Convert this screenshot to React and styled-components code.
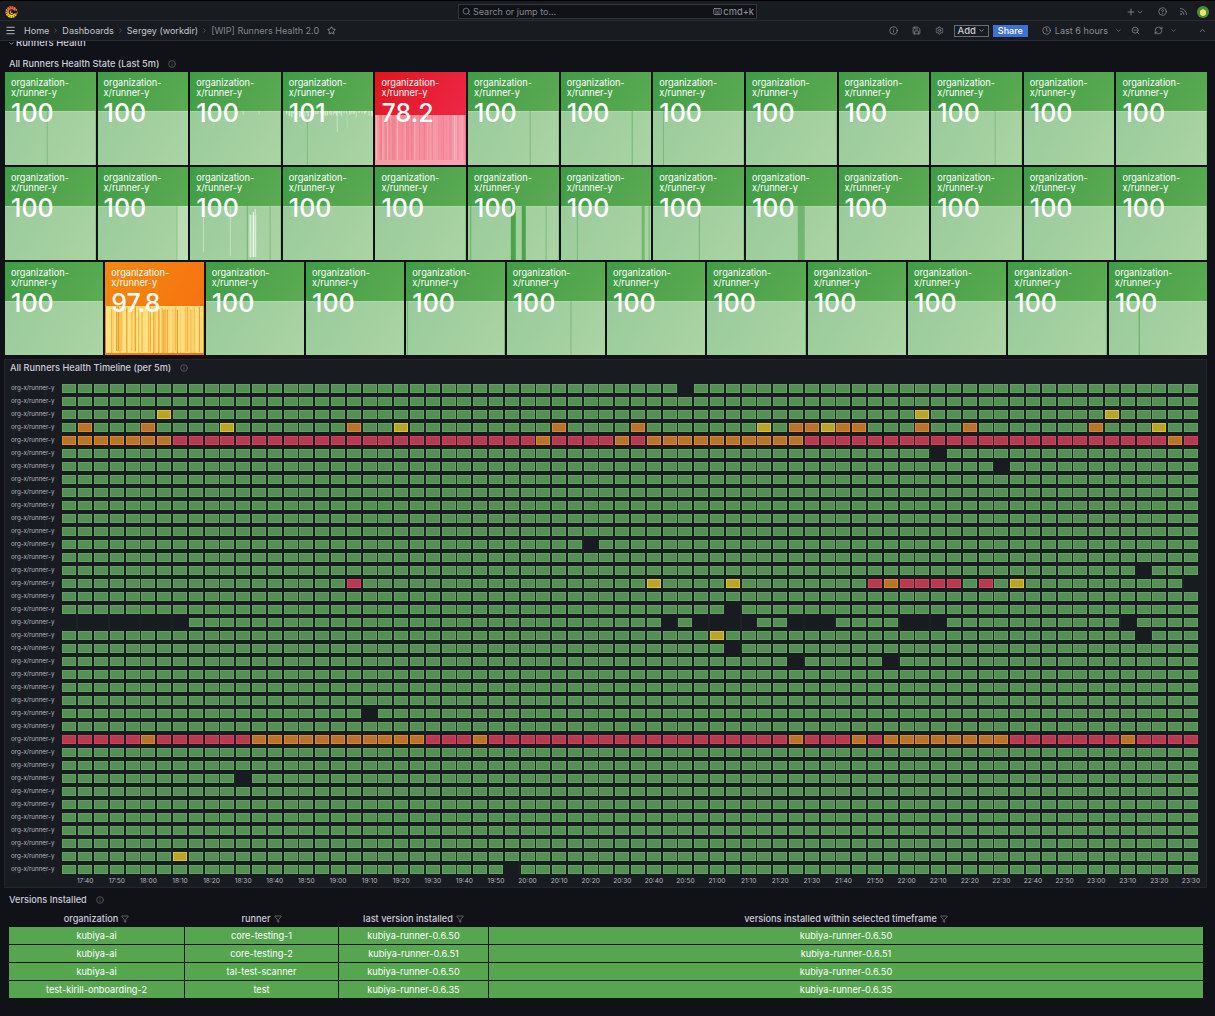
import React from "react";
import styled, { createGlobalStyle } from "styled-components";
import {
  Search, Menu, Star, Info, Save, Settings, Clock, ZoomOut, RefreshCw,
  ChevronDown, ChevronUp, ChevronRight, Plus, CircleHelp, Rss, Filter, Keyboard,
} from "lucide-react";

const Global = createGlobalStyle`
  html, body { margin: 0; padding: 0; background: #111217; }
  body { font-family: Inter, "Liberation Sans", sans-serif; color: #ccccdc; overflow: hidden; }
  #root { width: 1215px; height: 1016px; overflow: hidden; }
  * { box-sizing: border-box; }
`;

const Page = styled.div`
  display: flex;
  flex-direction: column;
  width: 1215px;
  height: 1016px;
  background: #111217;
`;

/* ---------- top bars ---------- */
const TopBar = styled.header`
  height: 21px;
  padding: 2px 6px 0 5px;
  display: grid;
  grid-template-columns: 1fr 300px 1fr;
  align-items: center;
  background: #181b1f;
  border-top: 1px solid #000;
  border-bottom: 1px solid #2a2c32;
`;
const LogoSlot = styled.div`
  display: flex;
  align-items: center;
`;
const SearchBox = styled.div`
  height: 15px;
  margin-left: 1px;
  display: flex;
  align-items: center;
  gap: 2px;
  padding: 0 2px 0 3px;
  background: #111217;
  border: 1px solid #33363c;
  font-size: 9px;
  color: #85868c;
`;
const SearchText = styled.span`
  flex: 1;
`;
const Shortcut = styled.span`
  display: flex;
  align-items: center;
  gap: 1px;
  color: #9a9ba3;
  font-size: 9.4px;
`;
const TopActions = styled.div`
  display: flex;
  align-items: center;
  justify-content: flex-end;
  gap: 12px;
  color: #8d8e96;
`;
const AddMenu = styled.span`
  display: flex;
  align-items: center;
  margin-right: 1.5px;
`;
const Avatar = styled.div`
  width: 12px;
  height: 12px;
  border-radius: 50%;
  margin-left: -2.5px;
  background: radial-gradient(circle at 50% 55%, #e9e66a 0 3px, #4b8f35 3.5px);
`;
const ToolRow = styled.div`
  height: 20px;
  padding: 0 3px 0 5px;
  display: flex;
  align-items: center;
  background: #181b1f;
  border-bottom: 1px solid #2a2c32;
`;
const Crumbs = styled.nav`
  display: flex;
  align-items: center;
  margin-left: 8px;
  font-size: 9.05px;
  color: #c4c5cf;
`;
const Sep = styled.span`
  display: flex;
  width: 13px;
  justify-content: center;
  color: #6f7077;
`;
const Current = styled.span`
  color: #85868c;
`;
const StarSlot = styled.span`
  display: flex;
  margin-left: 8px;
  color: #a9aab2;
`;
const ToolActions = styled.div`
  margin-left: auto;
  display: flex;
  align-items: center;
  color: #8d8e96;
  font-size: 9.1px;
`;
const ToolIcon = styled.span`
  display: flex;
  width: 23px;
  justify-content: center;
  margin-left: ${(p) => p.$gap || 0}px;
  margin-right: ${(p) => p.$after || 0}px;
`;
const AddButton = styled.button`
  height: 12px;
  width: 35px;
  margin-left: 3px;
  padding: 0;
  display: flex;
  align-items: center;
  justify-content: center;
  gap: 2px;
  background: transparent;
  border: 1px solid #6a6b73;
  color: #ccccdc;
  font: 500 9.5px Inter, sans-serif;
`;
const ShareButton = styled.button`
  height: 12px;
  width: 35px;
  margin-left: 4px;
  padding: 0;
  background: #3d71d9;
  border: 0;
  color: #fff;
  font: 500 9px Inter, sans-serif;
`;
const TimeRange = styled.span`
  display: flex;
  align-items: center;
  gap: 4px;
  margin-left: 14px;
  color: #8d8e96;
`;
const RangeCaret = styled.span`
  display: flex;
  margin-left: 3px;
`;

/* ---------- dashboard ---------- */
const Main = styled.main`
  flex: 1;
  display: flex;
  flex-direction: column;
  padding: 0 8px 0 4px;
  overflow: hidden;
`;
const RowHeader = styled.div`
  height: 7px;
  overflow: hidden;
  padding-left: 4px;
  flex: none;
`;
const RowHeaderInner = styled.div`
  margin-top: -4px;
  display: flex;
  align-items: center;
  gap: 1px;
  font: 500 9.5px/12px Inter, sans-serif;
  color: #ccccdc;
`;
const Title = styled.h2`
  margin: 0;
  height: 14px;
  padding-left: 5px;
  display: flex;
  align-items: center;
  gap: 9px;
  font: 500 9.2px/14px Inter, sans-serif;
  color: #ccccdc;
  flex: none;
`;
const TitleIcon = styled.span`
  display: flex;
  color: #6f7077;
`;
const StatSection = styled.section`
  margin-top: 9px;
  display: flex;
  flex-direction: column;
  flex: none;
`;
const Tiles = styled.div`
  margin: 1px 0 0 1px;
  display: flex;
  flex-direction: column;
  gap: 2px;
`;
const TileRow = styled.div`
  display: grid;
  grid-template-columns: repeat(${(p) => p.$count}, 1fr);
  gap: 2px;
`;
const tileBg = {
  green: "linear-gradient(120deg, #3f9c46, #64b056)",
  red: "linear-gradient(120deg, #e0161d, #f12b52)",
  orange: "linear-gradient(120deg, #f28a0f, #f86d10)",
};
const Tile = styled.div`
  position: relative;
  height: 93px;
  padding: 6px 6px 0;
  background: ${(p) => tileBg[p.$tone]};
  color: #fff;
  overflow: hidden;
`;
const TileLabel = styled.div`
  position: relative;
  font: 400 9.2px/10px Inter, sans-serif;
  z-index: 1;
`;
const TileValue = styled.div`
  position: relative;
  z-index: 1;
  font: 500 25px/30px Inter, sans-serif;
`;
const SparkSvg = styled.svg`
  position: absolute;
  inset: 0;
  width: 100%;
  height: 100%;
`;
const TimelinePanel = styled.section`
  margin-top: 4px;
  height: 529px;
  padding-top: 1px;
  background: #181b1f;
  border: 1px solid #24262c;
  flex: none;
`;
const TimelineGrid = styled.div`
  margin-top: 9px;
  padding-left: 6px;
  display: grid;
  grid-template-columns: 49.6px repeat(72, 14px);
  grid-auto-rows: 9px;
  column-gap: 1.8px;
  row-gap: 4px;
  background-image: repeating-linear-gradient(90deg, transparent 0 30.6px, rgba(204,204,220,.06) 30.6px 31.6px);
  background-position: 72.6px 0;
  background-size: 100% 100%;
`;
const RowLabel = styled.div`
  margin-top: -1px;
  font: 400 6.2px/9px Inter, sans-serif;
  color: #b9bac4;
  white-space: nowrap;
`;
const cellStyles = {
  g: ["#568f55", "#5fa45c"],
  r: ["#b53b50", "#d4405a"],
  o: ["#b9742b", "#de862c"],
  y: ["#b8a52b", "#dcc22c"],
};
const Cell = styled.div`
  background: ${(p) => (p.$state === "e" ? "transparent" : cellStyles[p.$state][0])};
  border: 1px solid ${(p) => (p.$state === "e" ? "transparent" : cellStyles[p.$state][1])};
`;
const AxisGrid = styled.div`
  margin-top: 2px;
  padding-left: 6px;
  height: 10px;
  display: grid;
  grid-template-columns: 49.6px repeat(72, 14px);
  column-gap: 1.8px;
`;
const AxisLabel = styled.div`
  grid-column: ${(p) => p.$col};
  grid-row: 1;
  display: flex;
  justify-content: center;
  font: 400 6.6px/10px Inter, sans-serif;
  color: #b9bac4;
  white-space: nowrap;
`;
const VersionsSection = styled.section`
  margin-top: 5px;
  display: flex;
  flex-direction: column;
  flex: none;
`;
const Table = styled.div`
  margin: 3px 0 0 5px;
  width: 1194px;
  display: flex;
  flex-direction: column;
  gap: 1px;
`;
const TableRow = styled.div`
  display: grid;
  grid-template-columns: 175px 153px 149px 1fr;
  gap: 1px;
  height: ${(p) => (p.$head ? "16px" : "17px")};
`;
const HeadCell = styled.div`
  display: flex;
  align-items: center;
  justify-content: center;
  gap: 3px;
  padding-top: 2px;
  font: 500 9.2px/14px Inter, sans-serif;
  color: #ccccdc;
`;
const DataCell = styled.div`
  display: flex;
  align-items: center;
  justify-content: center;
  background: #56a64f;
  color: #fff;
  font: 400 9.2px/17px Inter, sans-serif;
`;

/* ---------- data ---------- */
const rng = (seed) => {
  let s = seed;
  return () => {
    s = (s * 1103515245 + 12345) & 0x7fffffff;
    return s / 0x7fffffff;
  };
};
const markFill = {
  d: "rgba(72,160,72,.55)",
  s: "rgba(72,160,72,.95)",
  l: "rgba(255,255,255,.22)",
  m: "rgba(255,255,255,.5)",
  w: "rgba(255,255,255,.75)",
};
const spikes = (() => {
  const r = rng(7);
  const out = [];
  for (let x = 3; x < 90; x += 1.4 + r() * 2) out.push([x, 0.8 + r(), 39, 40 + r() * 6, "m"]);
  out.push([54, 0.8, 39, 60, "m"], [64, 0.8, 39, 57, "l"], [24, 0.7, 47, 93, "d"]);
  return out;
})();
const marks = {
  "0-0": [[42, 0.7, 39, 93, "d"]],
  "0-2": [[53, 0.7, 39, 43, "m"], [69, 0.7, 39, 43, "m"]],
  "0-3": spikes,
  "0-5": [[62, 0.8, 39, 93, "d"]],
  "0-6": [[71, 1, 39, 93, "d"]],
  "0-7": [[10, 0.8, 39, 93, "d"]],
  "0-10": [[64, 0.7, 39, 93, "d"]],
  "1-1": [[79, 12, 39, 93, "l"], [79, 0.7, 39, 93, "d"]],
  "1-2": [
    [13, 0.8, 39, 85, "m"], [40, 0.8, 39, 89, "m"], [57, 1, 39, 93, "d"], [59, 8, 48, 90, "l"],
    [60, 1.2, 48, 90, "m"], [63, 1.2, 45, 90, "w"], [65, 1.2, 42, 90, "m"], [80, 0.8, 39, 93, "d"],
  ],
  "1-5": [[2, 1.2, 39, 93, "d"], [43, 5, 39, 93, "s"], [54, 4, 39, 93, "s"], [78, 0.8, 39, 93, "d"]],
  "1-6": [[16, 0.8, 39, 93, "d"], [81, 3, 39, 93, "d"], [88, 1, 39, 93, "d"]],
  "1-7": [[46, 1, 39, 93, "d"]],
  "1-8": [[52, 7, 39, 93, "d"]],
  "2-4": [[1, 0.8, 39, 93, "d"]],
  "2-5": [[64, 0.8, 39, 93, "d"]],
  "2-11": [[30, 0.8, 39, 93, "s"]],
};
const tileRows = [
  ["100", "100", "100", "101", "78.2", ...Array(8).fill("100")],
  Array(13).fill("100"),
  ["100", "97.8", ...Array(10).fill("100")],
];

const empty = {
  0: [39], 5: [55], 6: [59], 12: [33], 14: [68], 17: [42], 19: [68], 20: [42],
  21: [46, 52], 25: [19], 30: [11], 37: [28],
  18: [0, 1, 2, 3, 4, 5, 6, 7, 38, 40, 41, 42, 43, 46, 47, 48, 53, 54, 55, 67],
};
const special = {
  2: { 6: "y", 54: "y", 66: "y" },
  3: { 1: "o", 5: "o", 10: "y", 18: "o", 21: "y", 31: "o", 36: "o", 44: "y", 46: "o", 47: "o", 48: "y", 49: "o", 50: "o", 54: "o", 57: "o", 65: "o", 69: "y" },
  15: { 18: "r", 37: "y", 42: "y", 51: "r", 52: "o", 53: "r", 54: "r", 55: "r", 56: "r", 58: "r", 60: "y", 71: "e" },
  19: { 41: "y" },
  36: { 7: "y" },
};
const orangeIn4 = [0, 1, 2, 3, 4, 5, 6, 30, 35, 37, 38, 39, 40, 41, 42, 43, 44, 45, 46, 70];
const orangeIn27 = [5, 12, 13, 14, 15, 16, 17, 18, 19, 20, 21, 22, 26, 46, 50, 52, 53, 54, 55, 56, 57, 58, 59, 67];

const stateOf = (r, c) => {
  if (r === 4) return orangeIn4.includes(c) ? "o" : "r";
  if (r === 27) return orangeIn27.includes(c) ? "o" : "r";
  if (empty[r] && empty[r].includes(c)) return "e";
  return (special[r] && special[r][c]) || "g";
};

const times = [];
for (let m = 17 * 60 + 40; m <= 23 * 60 + 30; m += 10) {
  times.push(`${Math.floor(m / 60)}:${String(m % 60).padStart(2, "0")}`);
}

const versions = [
  ["kubiya-ai", "core-testing-1", "kubiya-runner-0.6.50"],
  ["kubiya-ai", "core-testing-2", "kubiya-runner-0.6.51"],
  ["kubiya-ai", "tal-test-scanner", "kubiya-runner-0.6.50"],
  ["test-kirill-onboarding-2", "test", "kubiya-runner-0.6.35"],
];

/* ---------- drawings ---------- */
const GrafanaLogo = () => (
  <svg width="13" height="14" viewBox="0 0 14 15">
    <defs>
      <linearGradient id="gf" x1="0" y1="1" x2="0" y2="0">
        <stop offset="0" stopColor="#f6d32b" />
        <stop offset="1" stopColor="#f05a28" />
      </linearGradient>
    </defs>
    <circle cx="7" cy="7.5" r="5.4" fill="none" stroke="url(#gf)" strokeWidth="2.2" strokeDasharray="2 .5" />
    <circle cx="7" cy="7.5" r="3.8" fill="none" stroke="url(#gf)" strokeWidth="1.7" />
    <path d="M6.8 6 h6 v3 h-6z" fill="#181b1f" />
    <path d="M7 6.2 a1.4 1.4 0 1 0 1.3 2.2" fill="none" stroke="url(#gf)" strokeWidth="1.2" />
  </svg>
);

const Spark = ({ tone, width, id }) => {
  if (tone === "red") {
    const r = rng(31);
    const bars = [];
    for (let x = 1; x < width - 1; x += 1.6) {
      const v = r();
      bars.push(
        <rect key={x} x={x} y={43} width={1.1} height={45}
          fill={v > 0.5 ? "#fff" : "#f0325c"} fillOpacity={v > 0.5 ? (v - 0.5) * 0.7 : v * 0.5} />
      );
    }
    return (
      <SparkSvg viewBox={`0 0 ${width} 93`} preserveAspectRatio="none">
        <rect x="0" y="43" width={width} height="50" fill="#fff" fillOpacity=".5" />
        {bars}
        <rect x="0" y="88" width={width} height="5" fill="#fff" fillOpacity=".12" />
      </SparkSvg>
    );
  }
  if (tone === "orange") {
    const r = rng(53);
    const bars = [];
    for (let x = 1; x < width - 1; x += 1.7) {
      const v = r();
      bars.push(
        <rect key={x} x={x} y={44 + r() * 4} width={1.1} height={45}
          fill="#f08a14" fillOpacity={v > 0.3 ? (v - 0.3) * 1.4 : 0} />
      );
    }
    return (
      <SparkSvg viewBox={`0 0 ${width} 93`} preserveAspectRatio="none">
        <rect x="1" y="44" width={width - 1} height="47" fill="#ffe98a" fillOpacity=".92" />
        {bars}
      </SparkSvg>
    );
  }
  return (
    <SparkSvg viewBox={`0 0 ${width} 93`} preserveAspectRatio="none">
      <rect x="0" y="39" width={width} height="54" fill="#fff" fillOpacity=".46" />
      <rect x="0" y="39" width={width} height=".7" fill="#fff" fillOpacity=".25" />
      {(marks[id] || []).map((m, i) => (
        <rect key={i} x={m[0]} y={m[2]} width={m[1]} height={m[3] - m[2]} fill={markFill[m[4]]} />
      ))}
    </SparkSvg>
  );
};

const TitleInfo = () => (
  <TitleIcon>
    <Info size={8} />
  </TitleIcon>
);

export default function App() {
  return (
    <Page>
      <Global />
      <TopBar>
        <LogoSlot>
          <GrafanaLogo />
        </LogoSlot>
        <SearchBox>
          <Search size={9} />
          <SearchText>Search or jump to...</SearchText>
          <Shortcut>
            <Keyboard size={9} />
            cmd+k
          </Shortcut>
        </SearchBox>
        <TopActions>
          <AddMenu>
            <Plus size={10} />
            <ChevronDown size={8} />
          </AddMenu>
          <CircleHelp size={9} />
          <Rss size={9} />
          <Avatar />
        </TopActions>
      </TopBar>
      <ToolRow>
        <Menu size={11} color="#c4c5cf" />
        <Crumbs>
          <span>Home</span>
          <Sep><ChevronRight size={7} /></Sep>
          <span>Dashboards</span>
          <Sep><ChevronRight size={7} /></Sep>
          <span>Sergey (workdir)</span>
          <Sep><ChevronRight size={7} /></Sep>
          <Current>[WIP] Runners Health 2.0</Current>
          <StarSlot><Star size={9} /></StarSlot>
        </Crumbs>
        <ToolActions>
          <ToolIcon><Info size={9} /></ToolIcon>
          <ToolIcon><Save size={9} /></ToolIcon>
          <ToolIcon><Settings size={9} /></ToolIcon>
          <AddButton>Add<ChevronDown size={7} /></AddButton>
          <ShareButton>Share</ShareButton>
          <TimeRange>
            <Clock size={9} />
            Last 6 hours
            <RangeCaret><ChevronDown size={7} /></RangeCaret>
          </TimeRange>
          <ToolIcon $gap={2}><ZoomOut size={9} /></ToolIcon>
          <ToolIcon><RefreshCw size={9} /></ToolIcon>
          <ChevronDown size={7} />
          <ToolIcon $gap={14} $after={-2}><ChevronUp size={9} /></ToolIcon>
        </ToolActions>
      </ToolRow>
      <Main>
        <RowHeader>
          <RowHeaderInner>
            <ChevronDown size={7} />
            Runners Health
          </RowHeaderInner>
        </RowHeader>
        <StatSection>
          <Title>All Runners Health State (Last 5m) <TitleInfo /></Title>
          <Tiles>
            {tileRows.map((row, r) => (
              <TileRow key={r} $count={row.length}>
                {row.map((value, c) => {
                  const tone = value === "78.2" ? "red" : value === "97.8" ? "orange" : "green";
                  return (
                    <Tile key={c} $tone={tone}>
                      <Spark tone={tone} width={row.length === 13 ? 91 : 99} id={`${r}-${c}`} />
                      <TileLabel>organization-x/runner-y</TileLabel>
                      <TileValue>{value}</TileValue>
                    </Tile>
                  );
                })}
              </TileRow>
            ))}
          </Tiles>
        </StatSection>
        <TimelinePanel>
          <Title>All Runners Health Timeline (per 5m) <TitleInfo /></Title>
          <TimelineGrid>
            {Array.from({ length: 38 }, (_, r) => (
              <React.Fragment key={r}>
                <RowLabel>org-x/runner-y</RowLabel>
                {Array.from({ length: 72 }, (_, c) => (
                  <Cell key={c} $state={stateOf(r, c)} />
                ))}
              </React.Fragment>
            ))}
          </TimelineGrid>
          <AxisGrid>
            {times.map((t, i) => (
              <AxisLabel key={t} $col={2 * i + 3}>{t}</AxisLabel>
            ))}
          </AxisGrid>
        </TimelinePanel>
        <VersionsSection>
          <Title>Versions Installed <TitleInfo /></Title>
          <Table>
            <TableRow $head>
              <HeadCell>organization <Filter size={8} color="#85868c" /></HeadCell>
              <HeadCell>runner <Filter size={8} color="#85868c" /></HeadCell>
              <HeadCell>last version installed <Filter size={8} color="#85868c" /></HeadCell>
              <HeadCell>versions installed within selected timeframe <Filter size={8} color="#85868c" /></HeadCell>
            </TableRow>
            {versions.map((v, i) => (
              <TableRow key={i}>
                <DataCell>{v[0]}</DataCell>
                <DataCell>{v[1]}</DataCell>
                <DataCell>{v[2]}</DataCell>
                <DataCell>{v[2]}</DataCell>
              </TableRow>
            ))}
          </Table>
        </VersionsSection>
      </Main>
    </Page>
  );
}
